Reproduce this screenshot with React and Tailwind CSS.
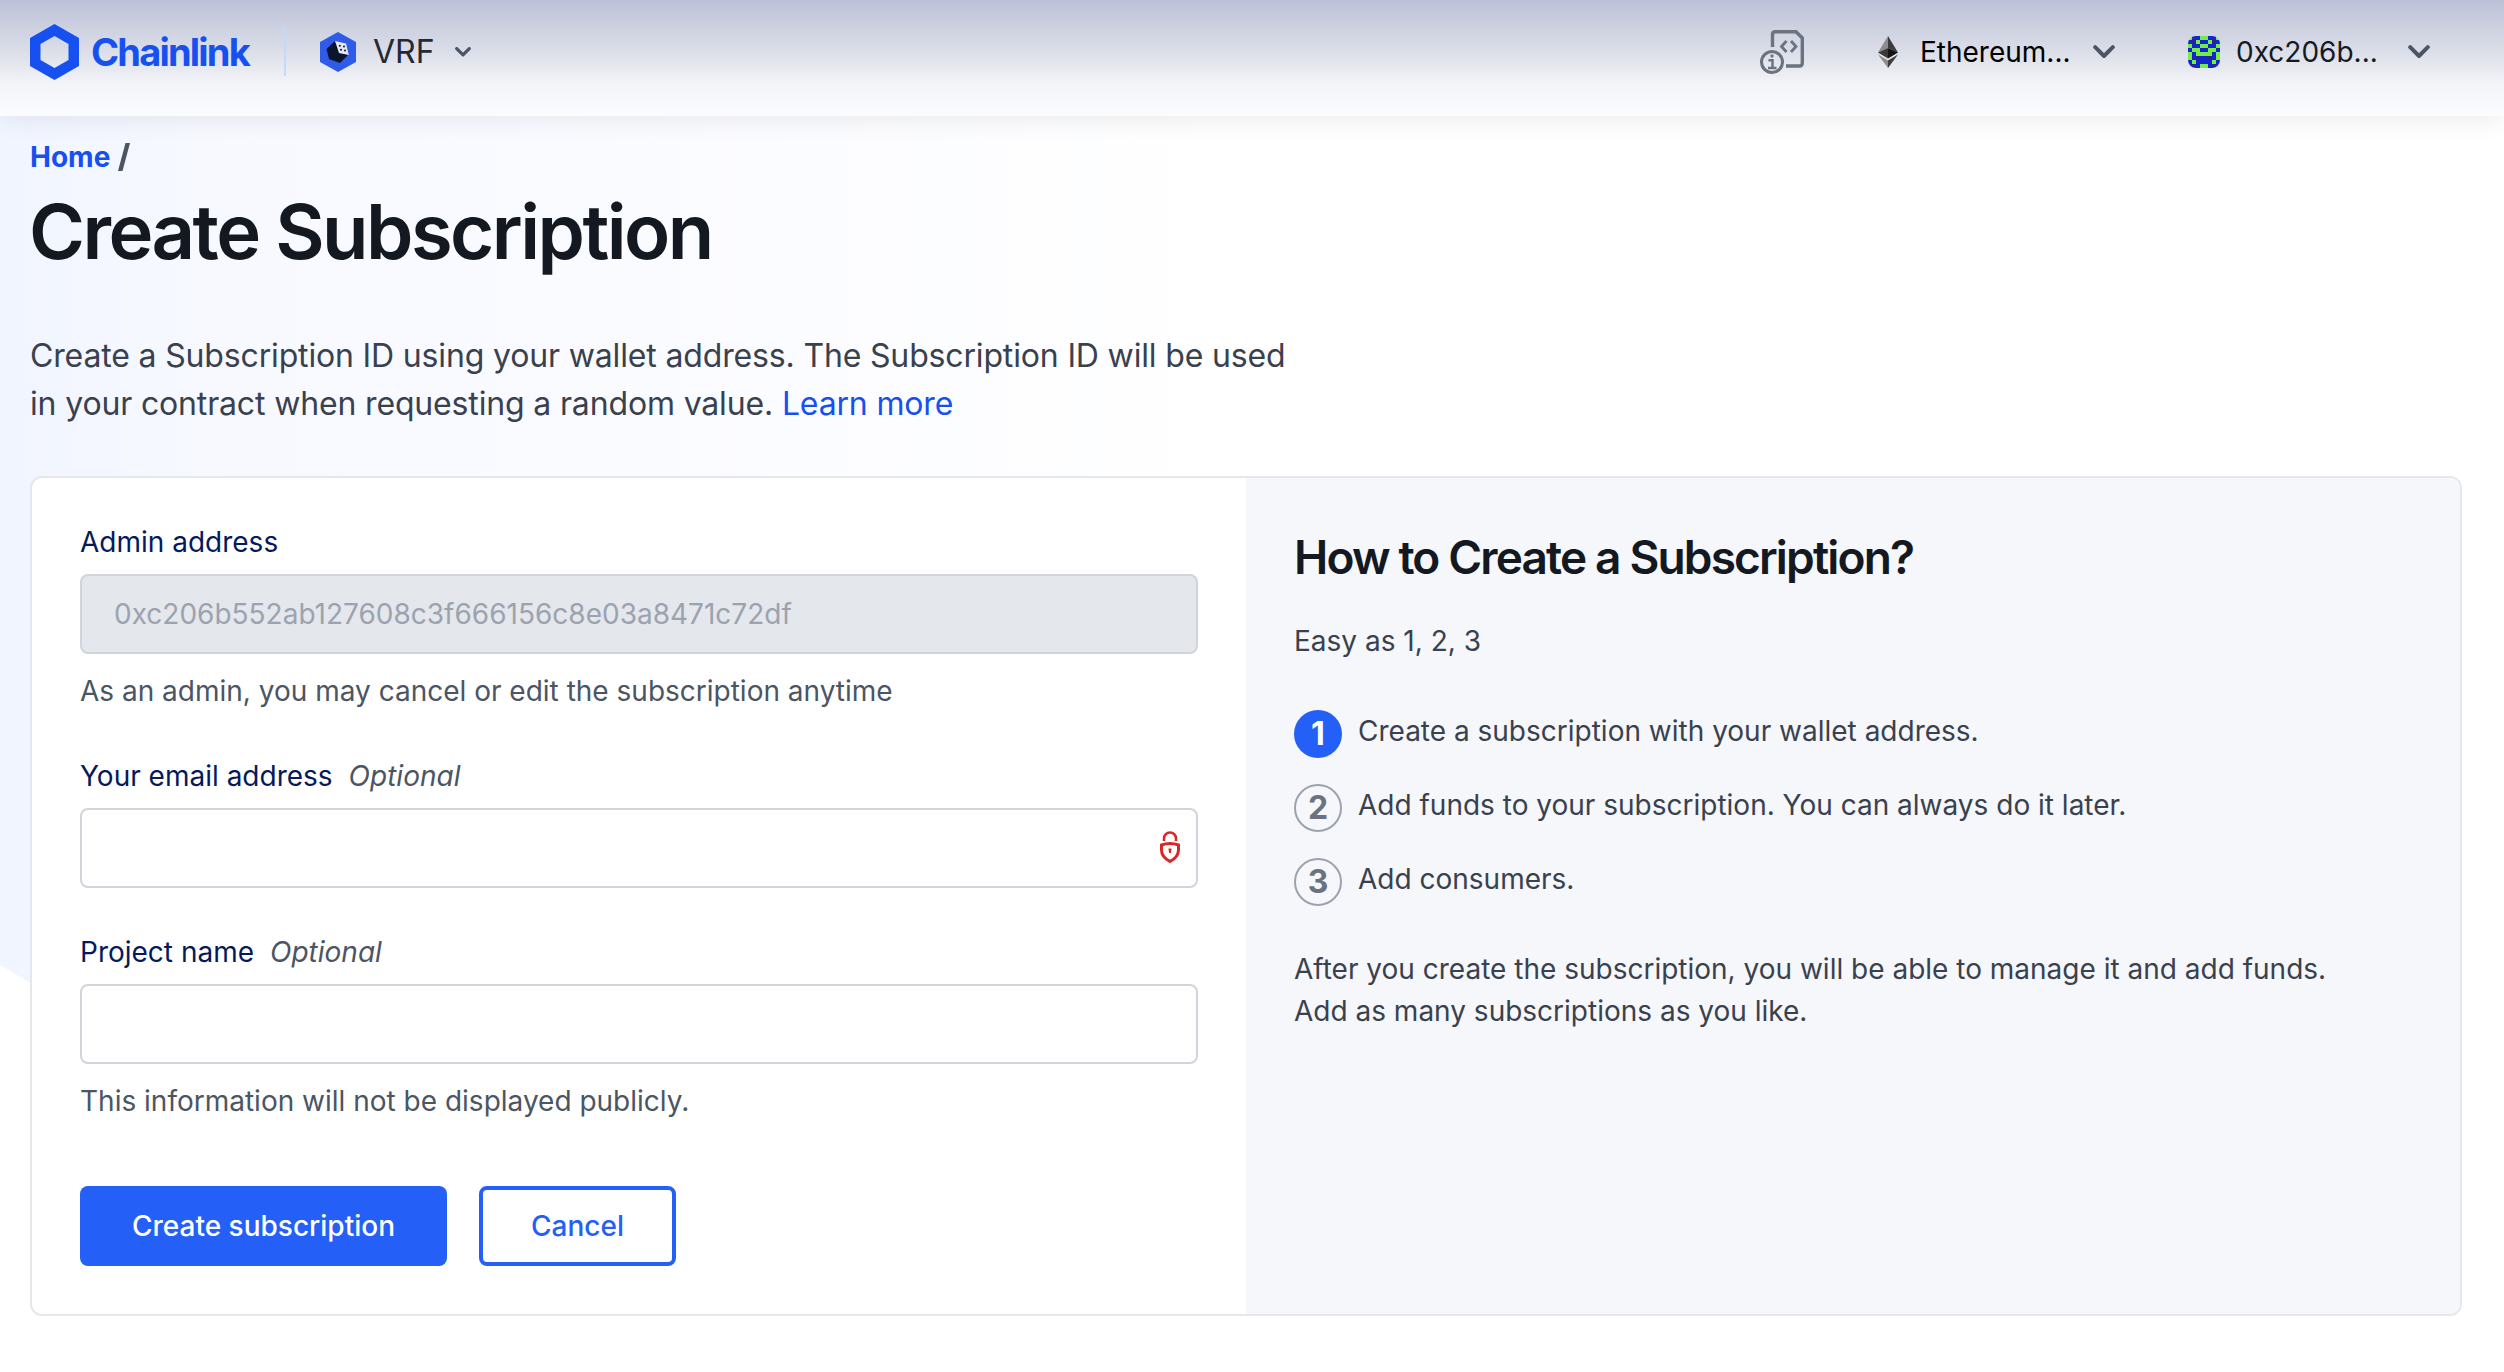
const Chevron = ({ className, sw = 4 }) => (
  <svg viewBox="0 0 22 14" fill="none" stroke="#4b5563" strokeWidth={sw} strokeLinecap="round" strokeLinejoin="round" className={className}>
    <path d="M2.2 2.2 11 11l8.8-8.8" />
  </svg>
);

const avatarRows = ["gbbggbbg", "bpgbbgpb", "gbbggbbg", "bggbbggb", "gbggggbg", "gbpbbpbg", "bgbbbbgb", "bpbggbpb"];
const avatarColors = { g: "#73ee45", b: "#1325d0", p: "#2b2390" };

function Avatar() {
  return (
    <svg viewBox="0 0 8 8" shapeRendering="crispEdges" className="size-8 shrink-0 rounded-lg">
      {avatarRows.map((row, y) =>
        row.split("").map((c, x) => <rect key={`${x}-${y}`} x={x} y={y} width="1" height="1" fill={avatarColors[c]} />)
      )}
    </svg>
  );
}

function Header() {
  return (
    <header className="flex h-[116px] items-start bg-[linear-gradient(to_bottom,#bcc1d7_0px,#dee1ea_56px,#f3f4f8_84px,#fbfcfe_116px)] shadow-[0_4px_24px_rgba(0,0,0,0.08)]">
      <div className="flex h-[104px] w-full items-center pl-[30px] pr-[74px]">
        <svg viewBox="0 0 49 56" className="h-14 w-[49px]">
          <path fillRule="evenodd" fill="#1650f0" d="M24.5 0 49 14v28L24.5 56 0 42V14ZM24.5 12 10.500 20v16l14 8 14-8V20Z" />
        </svg>
        <span className="ml-3 w-[181px] text-[38px] font-bold tracking-[-1.8px] text-[#1650f0]">Chainlink</span>
        <span className="ml-[12px] h-12 w-[2px] bg-[#bfdbfe]" />
        <svg viewBox="0 0 36 40" className="ml-[34px] h-10 w-9">
          <path d="M18 0 36 10v20L18 40 0 30V10Z" fill="#2f5be8" />
          <path d="m15 9-8.500 8 2.500 10 11 4 8-8-7-6Z" fill="#0b1530" />
          <path d="m15 9 11 2.500 2.800 11.500-9.800-2Z" fill="#e5e8f2" />
          <g fill="#0b1530">
            <circle cx="19.800" cy="13.800" r="1" />
            <circle cx="24" cy="14.600" r="1" />
            <circle cx="21" cy="17.800" r="1" />
            <circle cx="25" cy="18.600" r="1" />
          </g>
        </svg>
        <span className="ml-[17px] text-[32px] text-[#252933]">VRF</span>
        <Chevron className="ml-[20px] h-[10px] w-4" sw={4.5} />
        <div className="flex-1" />
        <svg viewBox="0 0 44 44" fill="none" stroke="#6b7280" strokeWidth="3.400" className="h-11 w-11 shrink-0">
          <path d="M12.500 17V4.500q0-2.800 2.800-2.800H36L42.300 8v25q0 3-3 3H26" />
          <path d="m26.500 11-5 5.500 5 5.500M31 11l5 5.500-5 5.500" strokeWidth="2.800" />
          <circle cx="12" cy="32" r="10.500" strokeWidth="3" />
          <path d="M8.500 30.200h4v7M8 38h8.500" strokeWidth="2.500" />
          <circle cx="12" cy="26" r="0.900" strokeWidth="1.500" />
        </svg>
        <svg viewBox="0 0 20 32" className="ml-[74px] h-8 w-5 shrink-0">
          <path d="M10 0 0 16.500 10 12Z" fill="#8c8c8c" /><path d="m10 0 10 16.500L10 12Z" fill="#3c3c3b" />
          <path d="m0 16.500 10-4.500v10.500Z" fill="#393939" /><path d="m20 16.500-10-4.500v10.500Z" fill="#141414" />
          <path d="m0 18.500 10 6V32Z" fill="#8c8c8c" /><path d="m20 18.500-10 6V32Z" fill="#3c3c3b" />
        </svg>
        <span className="ml-[22px] w-[151px] text-[28px] text-black">Ethereum...</span>
        <Chevron className="ml-[22px] mr-[73px] h-[14px] w-[22px]" />
        <Avatar />
        <span className="ml-4 w-[150px] text-[28px] text-[#16191f]">0xc206b...</span>
        <Chevron className="ml-[22px] h-[14px] w-[22px]" />
      </div>
    </header>
  );
}

const steps = ["Create a subscription with your wallet address.", "Add funds to your subscription. You can always do it later.", "Add consumers."];

function Label({ children, optional }) {
  return (
    <div className="flex h-10 items-center gap-4 text-[28px] text-[#051a5c]">
      {children}
      {optional && <span className="italic text-[#4b5563]">Optional</span>}
    </div>
  );
}

export default function App() {
  return (
    <div className="relative isolate h-[1372px] w-full overflow-hidden bg-white font-['Inter',sans-serif]">
      <div className="absolute left-0 top-0 -z-10 h-[1300px] w-[1252px] bg-[linear-gradient(to_right,#f1f5ff_0px,#f7f9ff_200px,#fafbff_600px,#ffffff_1252px)] [clip-path:polygon(0_0,100%_0,100%_1300px,558px_1300px,0_965px)]" />
      <Header />
      <main className="pl-[30px]">
        <div className="mt-[21px] flex h-10 items-center gap-[8px] text-[28px] font-bold text-[#1650f0]">
          Home
          <svg viewBox="0 0 12 28" className="h-7 w-3"><path d="M7.500 0H12L4.500 28H0Z" fill="#4b5563" /></svg>
        </div>
        <h1 className="-ml-px mt-[6px] h-24 text-[76px] font-semibold leading-[96px] tracking-[-2.55px] text-[#141921]">Create Subscription</h1>
        <p className="mt-[53px] w-[1290px] text-[32px] leading-12 tracking-[-0.155px] text-[#3a414e]">
          Create a Subscription ID using your wallet address. The Subscription ID will be used
          <br />
          in your contract when requesting a random value. <span className="text-[#1650f0]">Learn more</span>
        </p>
        <div className="mt-[48px] flex h-[840px] w-[2432px] overflow-hidden rounded-xl border-2 border-[#e4e7ec] bg-white">
          <section className="w-[1214px] px-12 pt-[44px]">
            <Label>Admin address</Label>
            <div className="mt-[12px] flex h-20 items-center rounded-lg border-2 border-[#d1d5db] bg-[#e4e7ec] px-8 text-[28px] text-[#9ca3af]">0xc206b552ab127608c3f666156c8e03a8471c72df</div>
            <p className="mt-[17px] h-10 text-[28px] leading-10 text-[#4b5563]">As an admin, you may cancel or edit the subscription anytime</p>
            <div className="mt-[45px]"><Label optional>Your email address</Label></div>
            <div className="mt-[12px] flex h-20 items-center justify-end rounded-lg border-2 border-[#d1d5db] pb-[2px] pr-4">
              <svg viewBox="0 0 20 32" fill="none" stroke="#dc2626" className="h-8 w-5">
                <path d="M4 10V7.500a6 6 0 0 1 12 0V10" strokeWidth="2.500" />
                <path d="M1.500 14q8.500-3 17 0v5q0 7-8.500 11.500Q1.500 26 1.500 19Z" strokeWidth="3" />
                <path d="M10 18v4M8.500 18.500h3" strokeWidth="2" />
              </svg>
            </div>
            <div className="mt-[44px]"><Label optional>Project name</Label></div>
            <div className="mt-[12px] h-20 rounded-lg border-2 border-[#d1d5db]" />
            <p className="mt-[17px] h-10 text-[28px] leading-10 text-[#4b5563]">This information will not be displayed publicly.</p>
            <div className="mt-[65px] flex gap-8">
              <button className="h-20 w-[367px] rounded-lg bg-[#2460f8] text-[28px] font-medium text-white">Create subscription</button>
              <button className="h-20 w-[197px] rounded-lg border-4 border-[#2460f8] text-[28px] font-medium text-[#2460f8]">Cancel</button>
            </div>
          </section>
          <section className="flex-1 bg-[#f5f7fb] px-12 pt-[48px] text-[28px] leading-[42px] text-[#3a414e]">
            <h2 className="h-16 text-[46px] font-semibold leading-[63px] tracking-[-1.85px] text-[#141921]">How to Create a Subscription?</h2>
            <p className="mt-[30px]">Easy as 1, 2, 3</p>
            <ol className="mt-[48px] flex flex-col gap-[26px]">
              {steps.map((s, i) => (
                <li key={s} className="flex h-12 gap-4">
                  <span className={i === 0 ? "flex size-12 items-center justify-center rounded-full bg-[#2460f8] text-[32px] font-bold text-white" : "flex size-12 items-center justify-center rounded-full border-2 border-[#9ca3af] text-[32px] font-bold text-[#6b7280]"}>{i + 1}</span>
                  <span>{s}</span>
                </li>
              ))}
            </ol>
            <p className="mt-[42px]">After you create the subscription, you will be able to manage it and add funds.<br />Add as many subscriptions as you like.</p>
          </section>
        </div>
      </main>
    </div>
  );
}
